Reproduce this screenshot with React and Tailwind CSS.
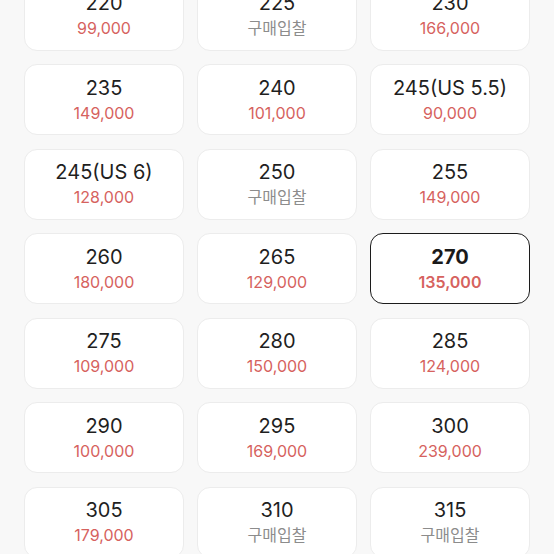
import React from "react";

const items = [
  ["220", "99,000"],
  ["225", null],
  ["230", "166,000"],
  ["235", "149,000"],
  ["240", "101,000"],
  ["245(US 5.5)", "90,000"],
  ["245(US 6)", "128,000"],
  ["250", null],
  ["255", "149,000"],
  ["260", "180,000"],
  ["265", "129,000"],
  ["270", "135,000", true],
  ["275", "109,000"],
  ["280", "150,000"],
  ["285", "124,000"],
  ["290", "100,000"],
  ["295", "169,000"],
  ["300", "239,000"],
  ["305", "179,000"],
  ["310", null],
  ["315", null],
];

export default function App() {
  return (
    <div
      className="w-[554px] h-[554px] overflow-hidden bg-[#f8f8f8]"
      style={{ fontFamily: 'Inter, "Noto Sans CJK KR", sans-serif' }}
    >
      <div className="grid grid-cols-3 gap-x-[13px] gap-y-[13.5px] px-[24px] -mt-[20.5px]">
        {items.map(([size, price, sel]) => (
          <div
            key={size}
            className={
              sel
                ? "h-[71px] rounded-[13px] bg-white border-[1.5px] border-[#1c1c1c] flex flex-col items-center justify-center gap-[3px]"
                : "h-[71px] rounded-[13px] bg-white border border-[#ececec] flex flex-col items-center justify-center gap-[3px]"
            }
          >
            <div
              className={
                sel
                  ? "text-[20px] leading-[24px] font-bold text-[#1a1a1a]"
                  : "text-[20px] leading-[24px] text-[#1f1f1f]"
              }
            >
              {size}
            </div>
            {price ? (
              <div
                className={
                  sel
                    ? "text-[16px] leading-[21px] font-semibold text-[#d6625e]"
                    : "text-[16px] leading-[21px] text-[#d6625e]"
                }
              >
                {price}
              </div>
            ) : (
              <div className="text-[16px] leading-[21px] text-[#8c8c8c]">구매입찰</div>
            )}
          </div>
        ))}
      </div>
    </div>
  );
}
